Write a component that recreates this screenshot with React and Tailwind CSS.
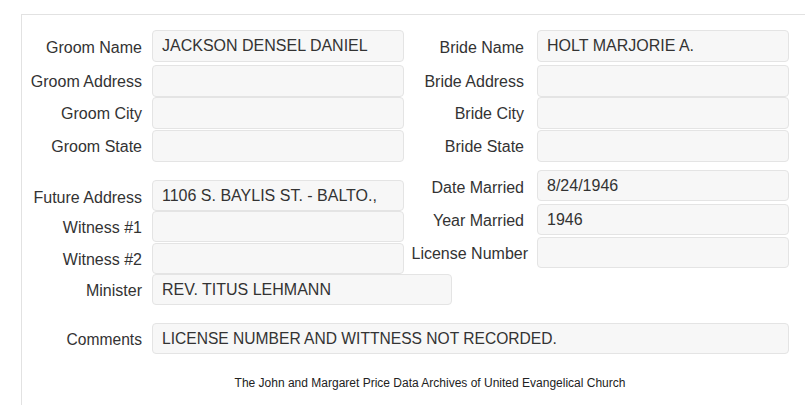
import React from 'react';

const Field = ({ label, value, rowClass, labelClass = 'w-[120px]', gapClass = 'ml-[10px]', inputClass = 'w-[252px]', h = 'h-[32px]', labelShift = 'pt-[2px]' }) => (
  <div className={`flex items-center ${rowClass}`}>
    <div className={`${labelClass} shrink-0 text-right whitespace-nowrap ${labelShift}`}>{label}</div>
    <div
      className={`${gapClass} ${inputClass} ${h} shrink-0 flex items-center px-[9px] bg-[#f7f7f7] border border-[#e4e4e4] rounded-[4px] whitespace-nowrap overflow-hidden`}
    >
      {value}
    </div>
  </div>
);

const MarriageRecord = () => {
  return (
    <div className="w-[805px] h-[405px] overflow-hidden bg-white text-[16px] text-[#333] font-['Liberation_Sans',Arial,sans-serif]">
      <div className="ml-[21px] mt-[14px] w-[817px] min-h-[400px] border-t border-l border-[#e2e2e2] pt-[15px]">
        {/* groom / bride */}
        <div className="flex">
          <div className="w-[382px]">
            <Field label="Groom Name" value="JACKSON DENSEL DANIEL" rowClass="" labelShift="pt-[3px]" />
            <Field label="Groom Address" value="" rowClass="mt-[3px]" />
            <Field label="Groom City" value="" rowClass="" />
            <Field label="Groom State" value="" rowClass="mt-[1px]" />
          </div>
          <div>
            <Field label="Bride Name" value="HOLT MARJORIE A." rowClass="" gapClass="ml-[13px]" labelShift="pt-[3px]" />
            <Field label="Bride Address" value="" rowClass="mt-[3px]" gapClass="ml-[13px]" />
            <Field label="Bride City" value="" rowClass="" gapClass="ml-[13px]" />
            <Field label="Bride State" value="" rowClass="mt-[1px]" gapClass="ml-[13px]" />
          </div>
        </div>

        {/* marriage details */}
        <div className="flex items-start">
          <div className="w-[382px] mt-[18px]">
            <Field label="Future Address" value="1106 S. BAYLIS ST. - BALTO.," rowClass="" h="h-[31px]" labelShift="pt-[4px]" />
            <Field label="Witness #1" value="" rowClass="" h="h-[31px]" labelShift="pt-[3px]" />
            <Field label="Witness #2" value="" rowClass="mt-[1px]" h="h-[31px]" labelShift="pt-[3px]" />
            <Field label="Minister" value="REV. TITUS LEHMANN" rowClass="" h="h-[31px]" inputClass="w-[300px]" labelShift="pt-[3px]" />
          </div>
          <div className="mt-[8px]">
            <Field label="Date Married" value="8/24/1946" rowClass="" gapClass="ml-[13px]" h="h-[31px]" labelShift="pt-[4px]" />
            <Field label="Year Married" value="1946" rowClass="mt-[3px]" gapClass="ml-[13px]" h="h-[31px]" labelShift="pt-[3px]" />
            <Field label="License Number" value="" rowClass="mt-[2px]" gapClass="ml-[9px]" labelClass="w-[124px]" h="h-[31px]" labelShift="pt-[2px]" />
          </div>
        </div>

        <div className="text-[15.6px]">
          <Field
            label="Comments"
            value="LICENSE NUMBER AND WITTNESS NOT RECORDED."
            rowClass="mt-[18px]"
            inputClass="w-[637px]"
            h="h-[31px]"
            labelShift="pt-[3px]"
          />
        </div>

        <div className="mt-[22px] text-center text-[12px] leading-[14px] text-[#222]">
          The John and Margaret Price Data Archives of United Evangelical Church
        </div>
      </div>
    </div>
  );
};

export default function App() {
  return <MarriageRecord />;
}
